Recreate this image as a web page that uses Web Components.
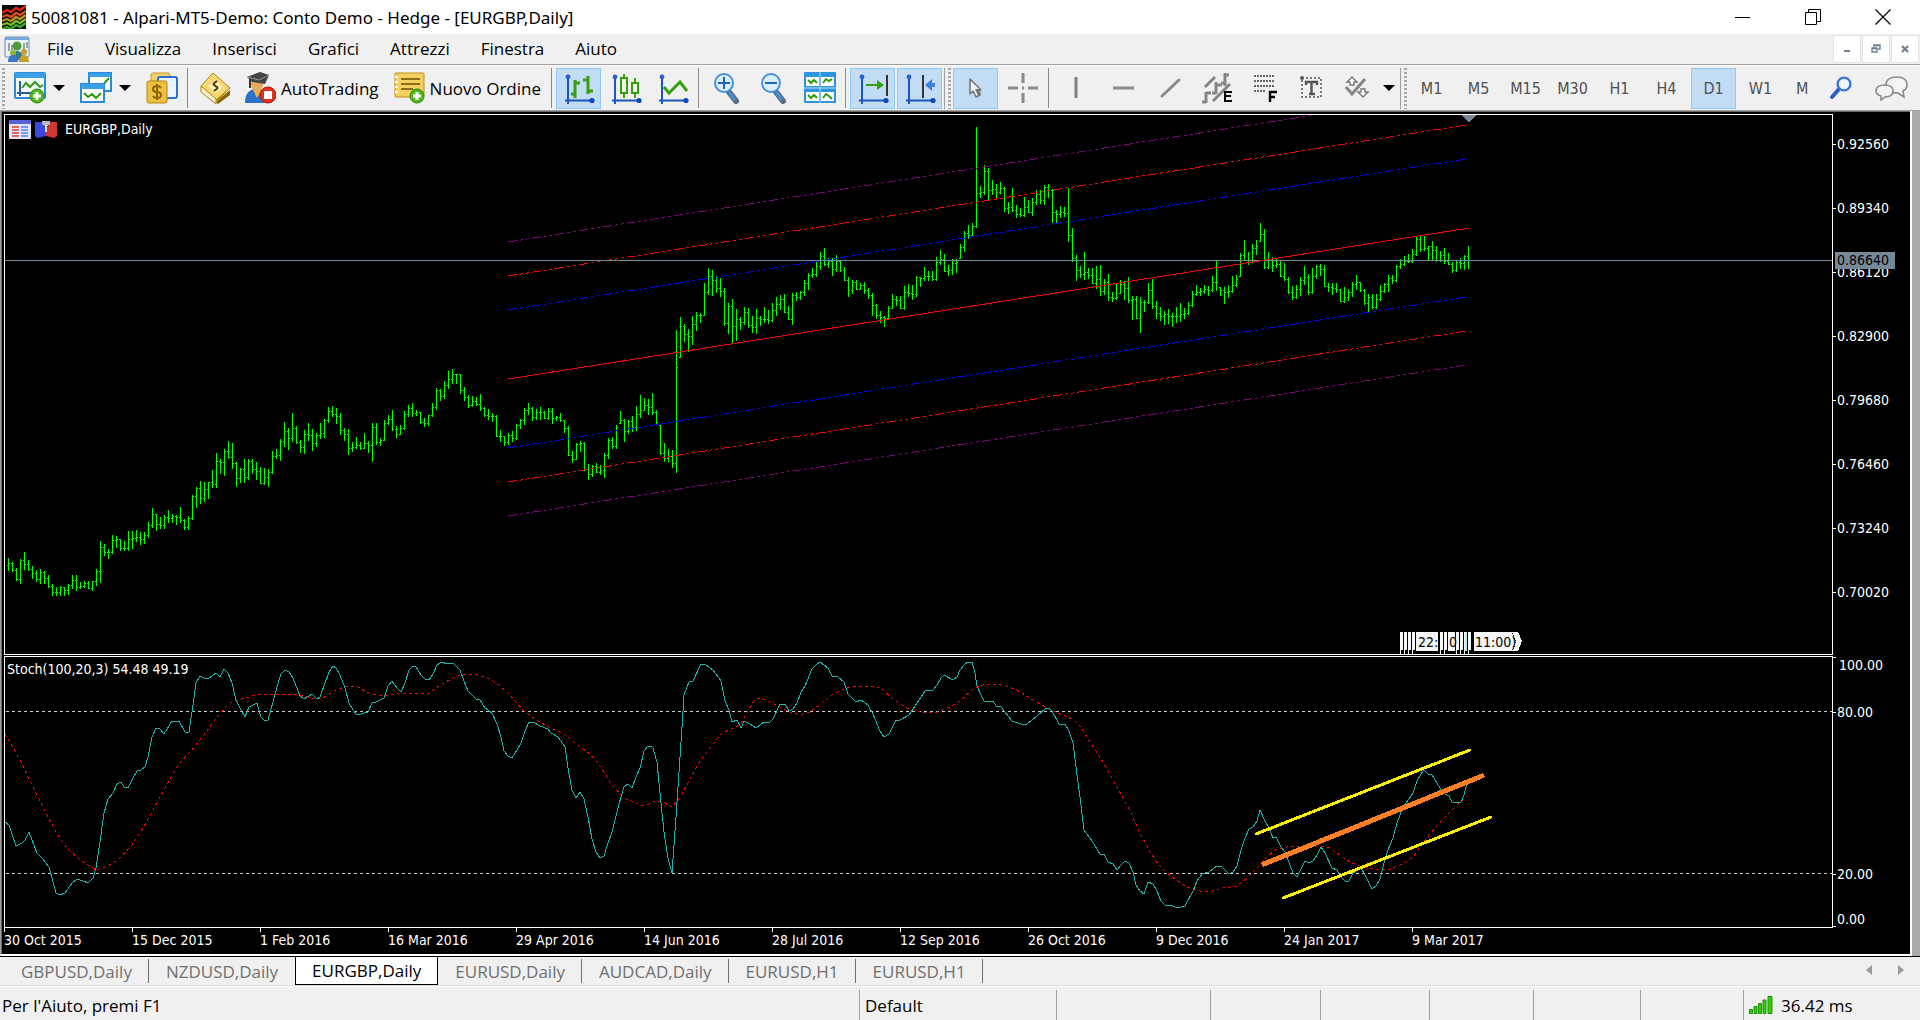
<!DOCTYPE html>
<html lang="it">
<head>
<meta charset="utf-8">
<title>50081081 - Alpari-MT5-Demo: Conto Demo - Hedge - [EURGBP,Daily]</title>
<style>
html,body{margin:0;height:100%}
body{background:#f0f0f0;overflow:hidden;font-family:"Open Sans","Noto Sans",sans-serif}
</style>
</head>
<body>
<terminal-app></terminal-app>
<script>
const define=(name,html,setup)=>{
  const t=document.createElement('template');
  t.innerHTML=html;
  customElements.define(name,class extends HTMLElement{
    constructor(){super();this.attachShadow({mode:'open'}).append(t.content.cloneNode(true));}
    connectedCallback(){if(setup&&!this.ready){this.ready=true;setup(this,this.shadowRoot);}}
  });
};

/* ---------- icons ---------- */
const axes='<path d="M5 4V32M2 28.5H30" stroke="#1f55c0" stroke-width="2" fill="none"/><circle cx="5" cy="5" r="2.4" fill="#2a5fd0"/><circle cx="29" cy="28.5" r="2.6" fill="#0a4ac0"/>';
const plus=(x,y)=>`<circle cx="${x}" cy="${y}" r="7" fill="#4cb81c" stroke="#2c8a0c"/><path d="M${x-4} ${y}h8M${x} ${y-4}v8" stroke="#fff" stroke-width="3"/>`;
const lens=s=>`<path d="M19 20l7 9" stroke="#5d6b7c" stroke-width="6" stroke-linecap="round"/><path d="M19 20l6 8" stroke="#3d8fe0" stroke-width="3"/><circle cx="14" cy="11" r="9" fill="#d9f0fc" stroke="#4a8fdc" stroke-width="2"/><path d="M8 11h12${s}" stroke="#1c62c4" stroke-width="2"/>`;
const mini=(x,y,p)=>`<rect x="${x}" y="${y}" width="13" height="9" fill="#fff"/><path d="M${x+2} ${y+p[0]}l3 ${p[1]}l3 ${p[2]}l3 ${p[3]}" fill="none" stroke="#2f9a10" stroke-width="2"/>`;
const icons={
app:[24,24,'<rect width="24" height="24" fill="#0a0a0a"/><g fill="none" stroke-width="2.4"><path d="M0 8l5-3 4 2 5-4 4 2 6-4" stroke="#e02418"/><path d="M0 12l5-2 4 2 5-4 4 2 6-4" stroke="#d84a20"/><path d="M0 16l5-2 4 2 5-4 4 2 6-4" stroke="#b8901c"/><path d="M0 20l5-2 4 2 5-4 4 2 6-4" stroke="#78b820"/><path d="M0 24l5-2 4 2 5-4 4 2 6-4" stroke="#38a828"/></g>'],
doc:[26,26,'<rect x="1" y="1" width="24" height="20" rx="1" fill="#e8f2fa" stroke="#6a8cb0"/><rect x="1" y="1" width="24" height="3" fill="#7aa8d8"/><path d="M5 7v8M8 9v7M20 7v8M23 6v6" stroke="#555"/><circle cx="13" cy="10" r="4.500" fill="#4c9a38"/><path d="M7 24q0-9 6-9t6 9z" fill="#2c7a94"/><circle cx="9" cy="17" r="3" fill="#8cb83a"/><circle cx="20" cy="16" r="3" fill="#c89c30"/><path d="M4 26q0-7 5-7t5 7z" fill="#3a78c8"/><path d="M15 26q0-7 5-7t5 7z" fill="#c8a030"/>'],
newchart:[32,32,'<rect x="1" y="1" width="30" height="25" rx="1" fill="#f4fbff" stroke="#2a8ad8" stroke-width="2"/><rect x="1" y="1" width="30" height="5" fill="#3ba0e8"/><path d="M6 9v15M3 21h20" stroke="#2a5a9c" stroke-width="2"/><path d="M8 16l4-5 4 4 5-5 5 5 3-2" fill="none" stroke="#2f9a10" stroke-width="2"/>'+plus(23,24)],
profiles:[32,32,'<rect x="9" y="1" width="22" height="18" fill="#fff" stroke="#2a8ad8" stroke-width="2"/><rect x="9" y="1" width="22" height="4" fill="#3ba0e8"/><path d="M20 12l2 2 7-8" stroke="#2f9a10" stroke-width="2" fill="none"/><rect x="1" y="12" width="23" height="18" fill="#fff" stroke="#2a8ad8" stroke-width="2"/><rect x="1" y="12" width="23" height="5" fill="#3ba0e8"/><path d="M4 21l4 4 4-3 4 4 5-5" stroke="#2f9a10" stroke-width="2" fill="none"/>'],
market:[32,32,'<rect x="5" y="1" width="19" height="22" rx="2" fill="#f0d070" stroke="#c89820"/><rect x="12" y="5" width="19" height="21" rx="2" fill="#e8f4ff" stroke="#2a72d0" stroke-width="2"/><rect x="1" y="9" width="20" height="22" rx="2" fill="#ecc040" stroke="#b88610"/><path d="M15 16q-1-2-4-2-4 0-4 3t4 3q4 0 4 3t-4 3q-3 0-4-2M11 12v16" fill="none" stroke="#8c6408" stroke-width="2"/>'],
book:[32,32,'<path d="M2 16L15 3l15 14-11 13z" fill="#c89418"/><path d="M17 30L31 18v5L19 32z" fill="#8a6208"/><path d="M2 14L14 1l17 15-14 12z" fill="#f4d874" stroke="#b0840c"/><path d="M2 14v6l15 12v-5z" fill="#fff4cc" stroke="#b0840c"/><path d="M9 14l7-6 8 7-7 6z" fill="#fff0b8"/><path d="M14 12l5 4M14 12l4-3M19 16l-4 3" stroke="#4a3408" stroke-width="2" fill="none"/>'],
auto:[32,32,'<path d="M1 31q0-14 12-14t12 14z" fill="#2b72c8"/><path d="M9 18l4 8 5-8z" fill="#f0b048"/><ellipse cx="13" cy="12" rx="6" ry="7" fill="#e8a860"/><path d="M3 5l13-5 9 3-4 9-13-2z" fill="#444"/><path d="M3 5l12 3 10-5" stroke="#999" fill="none"/><path d="M6 7v9" stroke="#333" stroke-width="2"/><circle cx="24" cy="23" r="8" fill="#e03020" stroke="#b01808"/><rect x="20" y="19" width="8" height="8" rx="1" fill="#fff"/>'],
order:[32,32,'<rect x="2" y="1" width="29" height="24" rx="1" fill="#f4d060" stroke="#c09018"/><path d="M8 7h19M8 12h19M8 17h12" stroke="#8c6c18" stroke-width="2"/><path d="M2 5h3M2 10h3M2 15h3M2 20h3" stroke="#fff" stroke-width="2"/>'+plus(24,24)],
bars:[32,32,axes+'<path d="M12 8v18M8 22h4M12 11h5M25 4v18M20 8h5M25 19h5" stroke="#35a00c" stroke-width="3" fill="none"/>'],
candles:[32,32,axes+'<path d="M14 2v24M25 6v20" stroke="#35a00c" stroke-width="2"/><rect x="11" y="6" width="6" height="15" fill="#eefbe8" stroke="#35a00c" stroke-width="2"/><rect x="22" y="11" width="6" height="10" fill="#eefbe8" stroke="#35a00c" stroke-width="2"/>'],
line:[32,32,axes+'<path d="M7 15l5 6 11-11 7 9" stroke="#35a00c" stroke-width="3" fill="none"/>'],
zoomin:[32,32,lens('M14 5v12')],
zoomout:[32,32,lens('')],
tile:[32,32,'<rect width="32" height="31" rx="1" fill="#2a94e0"/><path d="M16 0v31M0 16h32" stroke="#bfe2fa"/>'+mini(2,5,[3,3,-3,3])+mini(17,5,[6,-4,2,-2])+mini(2,20,[3,3,-3,3])+mini(17,20,[6,-4,2,3])],
scroll:[32,32,axes+'<path d="M9 12h11V8l7 5-7 5v-4H9z" fill="#35a00c"/><path d="M30 3v21" stroke="#333" stroke-width="2"/>'],
shift:[32,32,axes+'<path d="M19 3v23" stroke="#333" stroke-width="2"/><path d="M31 11h-3V7l-7 6 7 6v-4h3z" fill="#3b7fe0"/>'],
cursor:[32,32,'<path d="M10 7v15l3-3 3 6 4-2-3-5h4z" fill="#f4f4f4" stroke="#777" stroke-width="1.6" stroke-linejoin="round"/><path d="M15 17l3 7 3-2-2-5z" fill="#777"/>'],
cross:[32,32,'<path d="M16 1v10M16 21v10M1 16h10M21 16h10M15 16h2" stroke="#8a8a8a" stroke-width="3"/>'],
vline:[32,32,'<path d="M16 5v21" stroke="#808080" stroke-width="3"/>'],
hline:[32,32,'<path d="M6 16h21" stroke="#8a8a8a" stroke-width="3"/>'],
trend:[32,32,'<path d="M8 24L25 8" stroke="#8a8a8a" stroke-width="3" stroke-linecap="round"/>'],
equi:[32,32,'<g stroke="#858585" stroke-width="3" fill="none"><path d="M4 15L14 5M12 29L29 12M5 20v11M1 30h4M5 21h5M15 10v12M11 21h4M15 13h6M24 1v13M20 11h4M24 3h4"/></g><path d="M24 19v11M23 20h8M23 24h7M23 29h8" stroke="#000" stroke-width="2"/>'],
fibo:[32,32,'<path d="M6 4h20M6 9h20M6 14h20M6 19h12" stroke="#666" stroke-width="2" stroke-dasharray="2 1"/><path d="M22 19v11M21 20h8M21 25h6" stroke="#000" stroke-width="2.4"/>'],
label:[32,32,'<rect x="7" y="6" width="19" height="19" fill="none" stroke="#777" stroke-width="2" stroke-dasharray="2 2"/><circle cx="7" cy="6" r="2" fill="#555"/><path d="M11 13v-3h11v3M16.5 10v12M14 22h6" stroke="#555" stroke-width="2.4" fill="none"/>'],
arrows:[32,32,'<path d="M4 15l6 7 13-15" fill="none" stroke="#858585" stroke-width="3"/><path d="M10 5l5 5h-3v3H8v-3H5zM21 25l-5-5h3v-3h4v3h3z" fill="#fff" stroke="#777" stroke-width="1.4"/>'],
find:[24,24,'<path d="M3 21l8-9" stroke="#2a5fc8" stroke-width="4" stroke-linecap="round"/><circle cx="15" cy="8" r="6.4" fill="#eef6ff" stroke="#3b74d8" stroke-width="2.4"/>'],
chat:[34,26,'<g fill="#f4f4f4" stroke="#8a8a8a" stroke-width="1.6"><path d="M22 2c7 0 10 3 10 8 0 3-2 5-4 6l1 6-6-4c-8 0-12-3-12-8s4-8 11-8z"/><path d="M10 10c5 0 8 2 8 6s-3 6-8 6l-4 3v-4c-3-1-5-3-5-5 0-4 4-6 9-6z"/></g>'],
list:[22,19,'<rect width="22" height="19" rx="1" fill="#dfe4ff"/><rect width="22" height="4" fill="#5a64d8"/><path d="M3 7h7M3 10h7M3 13h7M3 16h7" stroke="#e06a60" stroke-width="2"/><path d="M12 7h7M12 10h7M12 13h7M12 16h7" stroke="#7a9af0" stroke-width="2"/>'],
depth:[22,19,'<path d="M0 2h8v4l3 1v9l-9 2-2-2z" fill="#3a48e0"/><path d="M22 2h-8v4l-3 1v9l8 2 3-2z" fill="#d03830"/><path d="M7 1h8v3l-2 2H9L7 4z" fill="#b8b8c8"/><path d="M11 5v7" stroke="#ddd" stroke-width="2"/>'],
min:[16,16,'<path d="M0 8.5h15" stroke="#000"/>'],
max:[16,16,'<path d="M.5 3.5h11v12H.5zM3.5 3V.5h12v12H12" fill="none" stroke="#000"/>'],
close:[16,16,'<path d="M.5.5l15 15M15.5.5l-15 15" stroke="#000" stroke-width="1.2"/>'],
cmin:[10,10,'<path d="M2 7h6" stroke="#6e7f92" stroke-width="2"/>'],
crest:[10,10,'<path d="M1 4h5v4H1zM3 3V1h6v4H7M1 4.5h5M3 1.5h6" fill="none" stroke="#6e7f92" stroke-width="1.4"/>'],
cclose:[10,10,'<path d="M2 2l6 6M8 2L2 8" stroke="#6e7f92" stroke-width="2.2"/>'],
signal:[24,18,'<g fill="#3ac80c" stroke="#1f9408"><path d="M.5 13.5h3v4h-3zM5 10.5h3v7H5zM9.5 7.5h3v10h-3zM14 4h3v13.5h-3zM19 .5h4v17h-4z"/></g>'],
drop:[12,6,'<path d="M0 0h12L6 6z" fill="#000"/>'],
prev:[6,10,'<path d="M6 0v10L0 5z" fill="#999"/>'],
next:[6,10,'<path d="M0 0v10l6-5z" fill="#999"/>']
};
define('ui-icon','<style>:host{display:block;flex:none}svg{display:block}</style>',(el,root)=>{
  const [w,h,m]=icons[el.getAttribute('name')];
  root.innerHTML+=`<svg width="${w}" height="${h}" viewBox="0 0 ${w} ${h}" aria-hidden="true">${m}</svg>`;
});

/* ---------- toolbar parts ---------- */
define('tool-button',`<style>
:host{display:block;flex:none;width:45px;height:41px}
:host([wide]){width:auto}:host([slim]){width:21px}:host([slim=last]){width:16px}
button{box-sizing:border-box;width:100%;height:100%;padding:0;border:1px solid transparent;background:none;display:flex;align-items:center;justify-content:center;gap:5px;font:17px "Open Sans",sans-serif;color:#000;white-space:nowrap}
:host([wide]) button{padding:0 6px}
:host([slim]) button{justify-content:flex-start}
:host([pressed]) button{background:#c1dcf3;border-color:#90c8f6}
:host([period]) button{font:16px "DejaVu Sans Condensed",sans-serif;color:#505050}
:host([period][wide]) button{padding:0 10px}
</style><button type="button"><slot></slot></button>`,(el,root)=>{
  const l=el.getAttribute('label'),b=root.querySelector('button');
  if(l)b.setAttribute('aria-label',l);
  if(el.hasAttribute('pressed'))b.setAttribute('aria-pressed','true');
});
define('tool-sep','<style>:host{display:block;flex:none;width:1px;height:40px;margin:0 2px 0 1px;background:#8c8c8c}</style>');
define('tool-grip','<style>:host{display:block;flex:none;width:3px;height:41px;background:repeating-linear-gradient(#a8a8a8 0 2px,transparent 2px 4px)}:host([edge]){border-left:1px solid #a0a0a0;padding-left:3px;background-clip:content-box}</style>');

define('title-bar',`<style>
:host{display:flex;align-items:center;height:34px;background:#fff;padding:0 2px;color:#000}
h1{font:17px "Noto Sans",sans-serif;margin:0 auto 0 5px;white-space:nowrap}
button{width:70px;height:34px;padding:0;border:0;background:none;display:flex;align-items:center;justify-content:center}
</style><ui-icon name="app"></ui-icon><h1><slot></slot></h1>
<button type="button" aria-label="Riduci a icona"><ui-icon name="min"></ui-icon></button>
<button type="button" aria-label="Ripristina"><ui-icon name="max"></ui-icon></button>
<button type="button" aria-label="Chiudi"><ui-icon name="close"></ui-icon></button>`);

define('menu-bar',`<style>
:host{display:flex;align-items:center;height:30px;background:#f0f0f0;border-bottom:1px solid #a0a0a0;padding:0 1px 0 4px}
nav{display:flex;margin:0 auto 0 1px}
nav button{font:17px/30px "Open Sans",sans-serif;border:0;background:none;padding:0 15px 0 16px;color:#000}
.child{display:flex;gap:1px}
.child button{width:28px;height:28px;padding:0;background:#fff;border:1px solid #e4e4e4;display:flex;align-items:center;justify-content:center}
</style><ui-icon name="doc"></ui-icon><nav>
<button type="button">File</button><button type="button">Visualizza</button><button type="button">Inserisci</button><button type="button">Grafici</button><button type="button">Attrezzi</button><button type="button">Finestra</button><button type="button">Aiuto</button></nav>
<div class="child"><button type="button" aria-label="Riduci grafico"><ui-icon name="cmin"></ui-icon></button><button type="button" aria-label="Ripristina grafico"><ui-icon name="crest"></ui-icon></button><button type="button" aria-label="Chiudi grafico"><ui-icon name="cclose"></ui-icon></button></div>`);

const tb=(icon,label,extra='')=>`<tool-button label="${label}" ${extra}><ui-icon name="${icon}"></ui-icon></tool-button>`;
const tf=(t,extra='')=>`<tool-button period ${extra}>${t}</tool-button>`;
define('tool-bar',`<style>
:host{display:flex;align-items:center;gap:2px;height:44px;background:#f0f0f0;border-top:1px solid #fff;overflow:hidden;padding-left:2px}
.end{display:flex;align-items:center;gap:22px;margin:0 11px 0 auto}
.end button{padding:0;border:0;background:none;display:block}
.group{display:flex}
</style><tool-grip></tool-grip>
<div class="group">${tb('newchart','Nuovo grafico')}${tb('drop','Elenco grafici','slim')}${tb('profiles','Profili')}${tb('drop','Elenco profili','slim')}${tb('market','Market')}</div>
<tool-sep></tool-sep>
<div class="group">${tb('book','Manuale')}<tool-button wide><ui-icon name="auto"></ui-icon>AutoTrading</tool-button><tool-button wide><ui-icon name="order"></ui-icon>Nuovo Ordine</tool-button></div>
<tool-sep></tool-sep>
${tb('bars','Grafico a barre','pressed')}${tb('candles','Candele')}${tb('line','Grafico a linee')}<tool-sep></tool-sep>
${tb('zoomin','Ingrandisci')}${tb('zoomout','Riduci')}${tb('tile','Affianca')}<tool-sep></tool-sep>
${tb('scroll','Scorrimento automatico','pressed')}${tb('shift','Sposta grafico','pressed')}<tool-grip edge></tool-grip>
${tb('cursor','Cursore','pressed')}${tb('cross','Mirino')}<tool-sep></tool-sep>
${tb('vline','Linea verticale')}${tb('hline','Linea orizzontale')}${tb('trend','Linea di tendenza')}${tb('equi','Canale equidistante')}${tb('fibo','Fibonacci')}${tb('label','Testo')}${tb('arrows','Frecce')}${tb('drop','Altri oggetti','slim="last"')}
<tool-grip edge></tool-grip>
${tf('M1')}${tf('M5')}${tf('M15')}${tf('M30')}${tf('H1')}${tf('H4')}${tf('D1','pressed')}${tf('W1')}${tf('M','wide')}
<div class="end"><button type="button" aria-label="Cerca"><ui-icon name="find"></ui-icon></button><button type="button" aria-label="Chat"><ui-icon name="chat"></ui-icon></button></div>`);

/* ---------- chart data ---------- */
/* High, low, close of each bar, in thirds of a pixel below the run's base line. */
const runs=[[340,`654 692 670,667 695 691,685 722 719,658 731 661,636 689 674,660 690 688,678 716 700,690 725 717,687 731 697,693 731 715,705 743 739,732 765 757,741 765 757,738 765 742,741 765 751,732 762 736,705 746 721,705 752 742,726 746 739,723 743 730,723 746 745,723 752 724,687 737 694,603 728 622,612 647 637,627 656 637,585 641 601,588 623 599,597 632 625,603 632 626,573 632 598,573 626 595,570 605 592,576 614 598,576 611 585,546 591 556,504 563 523,522 572 553,531 566 556,525 566 531,510 548 535,522 548 529,525 554 531,501 548 541,537 569 563,528 569 535,465 539 469,441 503 446,423 491 475,426 485 448,426 476 428,390 443 433,339 443 364,357 401 367,327 407 334,303 356 352,309 386 370,367 440 415,384 426 388,357 428 412,357 419 364,357 401 388,366 419 394,381 431 430,384 434 412,387 440 396,333 401 349,327 356 345,297 362 304,246 320 274,264 329 295,219 305 265,258 311 307,300 338 322,270 341 283,249 302 286,267 332 310,279 320 286,249 296 281,237 293 241,201 248 214,198 230 222,204 251 230,219 284 271,264 302 284,267 344 325,306 335 322,291 326 317,306 329 325,279 326 310,303 338 316,249 365 262,249 314 307,294 317 301,240 302 250,225 254 238,210 272 268,258 293 284,255 284 265,213 269 223,195 230 205,189 230 220,210 227 218,216 250 247,234 260 250,225 257 227,189 230 202,144 209 151,147 182 169,123 176 136,93 146 117,87 131 103,102 131 104,102 161 152,141 182 172,165 203 196,168 200 184,171 197 193,162 212 205,201 230 226,207 239 229,219 245 229,225 290 289,270 305 289,288 317 307,279 314 286,273 305 295,252 299 256`],
[230,`567 596 571,534 584 541,519 554 535,531 572 562,537 569 547,531 569 546,543 566 566,534 569 543,534 581 566,558 572 561,549 575 571,570 608 595,588 677 676,663 698 688,639 689 643,633 665 640,636 720 718,702 749 733,705 740 709,699 728 727,705 734 722,669 743 676,624 686 631,621 656 649,585 656 592,543 581 571,567 635 604,570 611 574,558 605 592,528 602 553,495 563 541,504 542 526,507 554 532,489 554 547,540 584 577,585 674 670,639 695 685,657 695 680,660 713 700,300 728 412,261 383 289,282 335 313,297 365 319,258 344 284,246 302 256,249 278 256,159 257 187,114 194 139,120 197 151,138 188 174,144 200 184,174 287 280,219 311 230,207 341 290,237 332 268,261 299 277,231 284 247,234 293 286,258 308 292,237 311 265,258 287 268,231 278 268,240 281 271,219 275 241,201 257 223,195 239 208,192 248 247,228 269 268,189 284 196,186 212 202,183 209 187,150 197 160,129 179 136,114 143 133,93 140 108,66 119 79,54 107 103,84 113 93,84 137 118,75 125 94,90 125 121,111 152 151,141 200 181,150 191 157,150 179 178,159 179 166,156 191 181,174 206 196,189 257 226,222 266 256,243 278 262,258 290 265,228 269 235,192 236 208,198 227 211,198 236 235,168 239 187,162 200 190,165 209 193,138 200 142,141 170 145,111 152 139,123 152 139,123 152 148,81 152 97,60 104 88,72 125 124,105 137 121,87 134 100,87 128 97,42 86 52,3 65 10`],
[110,`345 386 376,339 380 349,51 353 250,228 263 247,165 254 184,174 269 241,210 254 238,222 266 248,216 251 236,231 305 295,276 311 292,234 305 301,285 323 313,294 320 317,261 320 292,270 308 307,264 317 277,240 284 252,240 281 271,225 284 232,222 263 241,237 338 307,300 338 313,288 323 307,291 320 310,234 395 376,354 455 445,435 512 481,468 503 493,426 509 487,474 506 496,474 521 520,468 536 508,465 557 544,507 554 517,492 572 562,546 575 566,519 569 562,510 551 523,513 569 535,501 578 571,558 629 569,558 626 624,561 668 577,570 605 577,519 581 541,507 596 589,573 626 610,591 632 620,603 644 613,597 641 619,609 650 619,591 638 620,579 635 613,594 626 610,576 614 586,543 590 553,525 557 547,534 557 543,525 551 538,528 557 541,498 545 517,450 542 517,531 557 541,531 581 547,525 563 544,498 548 526,495 530 508,429 500 436,390 452 451,426 464 452,402 455 415,390 434 409,339 395 373,357 476 472,426 476 450,441 485 465,444 473 462,450 500 499,459 512 508,501 551 548,528 569 562,525 566 537,501 557 511,468 524 502,492 554 548,474 551 499,465 506 469,462 497 478,465 530 529,519 545 532,519 554 535,519 548 538,537 575 574,531 578 562,537 572 547,516 560 523,495 539 517,516 545 541,537 584 580,552 605 562,552 596 592,552 596 568,525 572 544,519 548 523,495 545 505,495 521 511,465 515 470,447 476 463,438 467 454,432 458 454,417 458 433,378 437 388,378 425 418,378 422 416,408 452 409,393 449 421,408 455 452,423 455 436,414 461 454,429 464 462,456 488 481,453 485 457,444 476 460,435 479 440,408 476 451`]];
let x=8,prev=565,bars='';
for(const [base,data] of runs)for(const row of data.split(',')){
  const [h,l,c]=row.split(' ').map(v=>base+Math.floor(v/3));
  const o=Math.min(Math.max(prev,h),l);
  bars+=`M${x} ${h}h1V${l+1}h-1zM${x-1} ${o}h1v1h-1zM${x+1} ${c}h1v1h-1z`;
  prev=c;x+=4;
}
const K='5,822 9,825 16,846 22,843 25,840 29,832 37,853 42,858 49,867 56,893 60,895 65,893 72,883 77,879 83,881 88,883 93,878 96,868 100,842 104,813 108,799 113,793 117,784 121,782 124,787 128,788 132,780 137,771 141,770 145,767 148,757 152,737 156,728 160,729 164,734 172,721 179,721 185,732 189,732 193,705 196,683 200,676 204,678 209,678 216,673 220,677 224,669 228,673 232,683 236,700 240,708 245,717 249,707 257,703 261,717 264,720 268,720 273,702 277,687 281,674 285,670 289,672 293,678 300,696 304,699 312,694 317,699 320,697 325,683 329,672 333,666 336,668 340,675 345,688 349,703 353,710 357,715 368,712 372,703 376,702 384,698 388,686 392,681 397,688 401,692 405,683 409,670 413,666 416,667 421,675 425,679 429,680 433,674 437,665 442,662 447,664 450,663 454,664 460,670 464,681 468,691 476,699 480,700 485,708 492,713 497,724 501,737 504,751 508,756 512,758 517,750 521,743 525,731 529,722 533,722 540,726 548,729 551,733 558,737 565,747 568,768 572,790 576,798 580,792 584,799 588,817 592,839 596,852 600,858 604,856 608,843 612,832 619,804 624,787 628,784 632,788 636,777 640,768 644,751 648,746 651,746 653,748 657,762 660,793 664,832 668,858 672,873 676,817 680,757 682,727 684,695 689,682 693,681 701,664 705,664 713,670 721,681 725,701 729,710 732,722 737,720 741,728 744,721 750,724 756,728 764,722 769,723 773,719 780,704 785,704 789,711 793,709 797,703 801,692 805,686 812,669 817,664 820,662 828,668 832,676 837,676 844,682 848,694 856,702 861,700 868,705 873,714 880,731 884,737 889,734 896,720 900,720 909,715 917,703 925,691 933,690 937,685 941,678 944,675 953,680 957,677 960,670 964,665 968,662 972,662 975,673 977,686 981,695 984,701 993,701 996,706 1001,707 1012,721 1021,724 1027,724 1037,716 1045,709 1049,708 1052,711 1059,724 1065,724 1069,731 1073,743 1076,767 1080,797 1084,830 1092,841 1100,854 1104,854 1108,862 1113,864 1117,870 1121,865 1125,861 1129,863 1133,872 1136,885 1140,891 1144,894 1148,882 1153,884 1157,891 1161,901 1165,905 1173,906 1177,908 1185,906 1193,891 1197,881 1202,874 1209,872 1217,866 1221,866 1225,870 1229,874 1233,872 1237,866 1241,850 1245,838 1249,829 1253,827 1257,821 1260,810 1264,819 1269,828 1273,838 1276,837 1281,847 1285,852 1290,865 1293,873 1297,877 1301,869 1305,861 1309,863 1313,861 1317,855 1321,847 1325,853 1332,868 1337,870 1341,877 1345,881 1349,881 1353,873 1361,868 1365,875 1372,889 1376,886 1380,879 1384,863 1388,850 1393,838 1397,823 1403,807 1409,799 1413,793 1417,781 1421,774 1424,770 1428,774 1432,775 1437,783 1443,793 1449,796 1452,802 1461,802 1464,795 1467,783';
const D='5,734 11,744 22,764 32,785 43,807 56,832 67,848 80,860 96,870 108,866 119,859 132,845 143,828 152,812 165,788 178,765 191,751 204,735 217,717 230,703 238,700 256,695 273,694 295,694 312,698 323,698 336,690 347,686 358,687 371,694 384,696 397,694 429,693 442,684 455,677 463,674 477,675 488,678 499,685 510,695 523,710 536,720 553,729 564,734 575,743 590,754 601,767 611,784 624,798 640,805 647,805 655,801 663,802 672,807 680,798 690,779 700,761 710,748 722,733 740,725 748,711 755,699 761,698 768,701 780,707 790,712 800,715 810,712 822,703 833,694 847,688 858,686 873,686 882,689 893,699 907,708 922,712 937,712 950,707 960,701 973,689 983,685 993,684 1003,685 1017,690 1033,700 1053,711 1065,716 1074,720 1080,726 1090,742 1103,762 1117,787 1130,811 1140,833 1150,852 1158,864 1167,873 1175,879 1187,887 1200,891 1212,891 1223,888 1237,886 1247,878 1258,867 1267,857 1275,850 1287,847 1317,846 1330,848 1340,855 1350,862 1360,866 1373,869 1390,869 1403,864 1413,857 1420,847 1430,834 1443,819 1457,805 1467,796';

const band=(y,c,dash)=>`<path d="M508 ${y}L${dash?1466:1469} ${y-151}" stroke="${c}" fill="none" ${dash?'stroke-dasharray="9 3 3 3 3 3"':''}/>`;
const flags=[1400,1404,1408,1412,1440,1444,1456,1460,1464,1468].map(v=>`<path d="M${v} 632h3v18h-2v4h-1z"/>`).join('');
define('price-pane',`<style>
:host{display:block;position:relative;border:1px solid #fff;overflow:hidden;background:#000;min-height:0}
svg.plot{display:block;position:absolute;inset:0;width:100%;height:100%}
header{position:absolute;left:4px;top:4px;display:flex;align-items:center;gap:4px;color:#fff;font:14px/20px "DejaVu Sans Condensed",sans-serif}
header span{padding-left:4px}
text{font:14px "DejaVu Sans Condensed",sans-serif}
</style><svg class="plot" shape-rendering="crispEdges"><g transform="translate(-5 -115)">
<path d="${bars}" fill="#0f0"/>
${band(242,'#800080',1)}${band(276,'#f00',1)}${band(310,'#00f',1)}
<path d="M5 260.5H9999" stroke="#778899"/>
${band(379,'#f00')}${band(448,'#00f',1)}${band(482,'#f00',1)}${band(516,'#800080',1)}
<path d="M1461 115h15l-7 8z" fill="#778899"/>
<g fill="#f6f6f6">${flags}<path d="M1416 632h22v19h-22zM1448 632h7v19h-7zM1474 632h44l4 9-4 10h-44z"/><path d="M1465 633h2v18h-2z" fill="#aeeef0"/></g>
<path d="M1512 633l4 9-4 9" fill="none" stroke="#000" stroke-dasharray="1 1"/>
<text x="1418" y="647">22:</text><text x="1449" y="647">0</text><text x="1475" y="647">11:00)</text>
</g></svg><header><ui-icon name="list"></ui-icon><ui-icon name="depth"></ui-icon><span>EURGBP,Daily</span></header>`);

define('stoch-pane',`<style>
:host{display:block;position:relative;border:1px solid #fff;overflow:hidden;background:#000}
svg{display:block;position:absolute;inset:0;width:100%;height:100%}
span{position:absolute;left:2px;top:2px;color:#fff;font:14px/20px "DejaVu Sans Condensed",sans-serif}
</style><svg shape-rendering="crispEdges"><g transform="translate(-5 -657)" fill="none">
<path d="M6 711.5H9999M6 873.5H9999" stroke="#d0d0d0" stroke-dasharray="3 3"/>
<polyline points="${D}" stroke="#f00" stroke-dasharray="3 3"/><polyline points="${K}" stroke="#20b2aa"/>
<g stroke-linecap="round"><path d="M1256 834L1470 750M1283 898L1491 817" stroke="#fff200" stroke-width="3"/><path d="M1264 864L1482 776" stroke="#ff7f27" stroke-width="5"/></g>
</g></svg><span>Stoch(100,20,3) 54.48 49.19</span>`);

define('price-scale',`<style>
:host{display:block;position:relative;color:#fff;font:14px "DejaVu Sans Condensed",sans-serif;margin-top:-2px}
div{height:64px;display:flex;align-items:center;gap:1px}
div::before{content:"";width:3px;height:1px;background:#fff}
mark{position:absolute;left:2px;top:140px;width:60px;line-height:17px;background:#778899;color:#000;padding-left:2px;box-sizing:border-box}
</style>${['0.92560','0.89340','0.86120','0.82900','0.79680','0.76460','0.73240','0.70020'].map(v=>`<div>${v}</div>`).join('')}<mark>0.86640</mark>`);
define('stoch-scale',`<style>
:host{display:flex;flex-direction:column;color:#fff;font:14px/18px "DejaVu Sans Condensed",sans-serif}
div{height:18px;display:flex;align-items:center;gap:1px}
div::before{content:"";width:3px;height:1px;background:#fff}
.top::before{align-self:start;margin-top:1px}.bottom::before{align-self:end;margin-bottom:1px}
.top{gap:3px}.high{margin-top:29px}.low{margin-top:144px}.bottom{margin-top:27px}
</style><div class="top">100.00</div><div class="high">80.00</div><div class="low">20.00</div><div class="bottom">0.00</div>`);
define('time-scale',`<style>
:host{display:flex;color:#fff;font:14px/16px "DejaVu Sans Condensed",sans-serif;overflow:hidden}
div{flex:none;width:128px;white-space:nowrap}
div::before{content:"";display:block;width:1px;height:4px;background:#fff}
</style>${['30 Oct 2015','15 Dec 2015','1 Feb 2016','16 Mar 2016','29 Apr 2016','14 Jun 2016','28 Jul 2016','12 Sep 2016','26 Oct 2016','9 Dec 2016','24 Jan 2017','9 Mar 2017'].map(v=>`<div>${v}</div>`).join('')}`);

define('chart-window',`<style>
:host{display:flex;flex:1;min-height:0;background:#aaa;border-top:1px solid #a0a0a0;border-bottom:1px solid #000}
main{flex:1;min-width:0;display:grid;grid-template:minmax(0,1fr) 272px 25px / minmax(0,1fr) 77px;row-gap:1px;background:#000;border:1px solid #696969;border-width:1px 0 0 1px;padding:2px 0 0 2px}
.frame{flex:1;min-width:0;display:flex;border-left:1px solid #a0a0a0;border-right:2px solid #fff;border-bottom:2px solid #fff;margin-right:8px}
time-scale{grid-column:1/3;margin-top:-1px}
</style><div class="frame"><main><price-pane></price-pane><price-scale></price-scale><stoch-pane></stoch-pane><stoch-scale></stoch-scale><time-scale></time-scale></main></div>`);

define('sheet-tabs',`<style>
:host{display:flex;align-items:flex-start;height:28px;background:#f0f0f0;border-bottom:1px solid #ddd;padding-left:4px}
button{font:17px/27px "Open Sans",sans-serif;padding:0 17px;height:28px;border:0;background:none;color:#707070}
button.sep{background:linear-gradient(#707070,#707070) right 50%/1px 24px no-repeat}
button[aria-selected=true]{background:#fff;color:#000;border:1px solid #000;border-top:0;padding:0 16px}
.nav{display:flex;gap:26px;margin:8px 16px 0 auto}
.nav button{padding:0;height:10px}
</style><button type="button" role="tab" class="sep">GBPUSD,Daily</button><button type="button" role="tab">NZDUSD,Daily</button><button type="button" role="tab" aria-selected="true">EURGBP,Daily</button><button type="button" role="tab" class="sep">EURUSD,Daily</button><button type="button" role="tab" class="sep">AUDCAD,Daily</button><button type="button" role="tab" class="sep">EURUSD,H1</button><button type="button" role="tab" class="sep">EURUSD,H1</button>
<div class="nav"><button type="button" aria-label="Precedente"><ui-icon name="prev"></ui-icon></button><button type="button" aria-label="Successivo"><ui-icon name="next"></ui-icon></button></div>`);

define('status-bar',`<style>
:host{display:flex;align-items:flex-end;height:33px;border-top:1px solid #fff;background:#f0f0f0;font-size:17px;color:#000}
div{box-sizing:border-box;height:30px;display:flex;align-items:center;padding-left:5px;gap:8px;border-left:1px solid #a0a0a0}
.help{flex:1;border:0;padding-left:2px}
</style><div class="help">Per l'Aiuto, premi F1</div><div style="width:197px">Default</div><div style="width:154px"></div><div style="width:110px"></div><div style="width:109px"></div><div style="width:104px"></div><div style="width:107px"></div><div style="width:103px"></div><div style="width:177px"><ui-icon name="signal"></ui-icon>36.42 ms</div>`);

define('terminal-app',`<style>:host{display:flex;flex-direction:column;height:100vh}title-bar,menu-bar,tool-bar,sheet-tabs,status-bar{flex:none}</style>
<title-bar>50081081 - Alpari-MT5-Demo: Conto Demo - Hedge - [EURGBP,Daily]</title-bar>
<menu-bar></menu-bar><tool-bar></tool-bar><chart-window></chart-window><sheet-tabs></sheet-tabs><status-bar></status-bar>`);
</script>
</body>
</html>
